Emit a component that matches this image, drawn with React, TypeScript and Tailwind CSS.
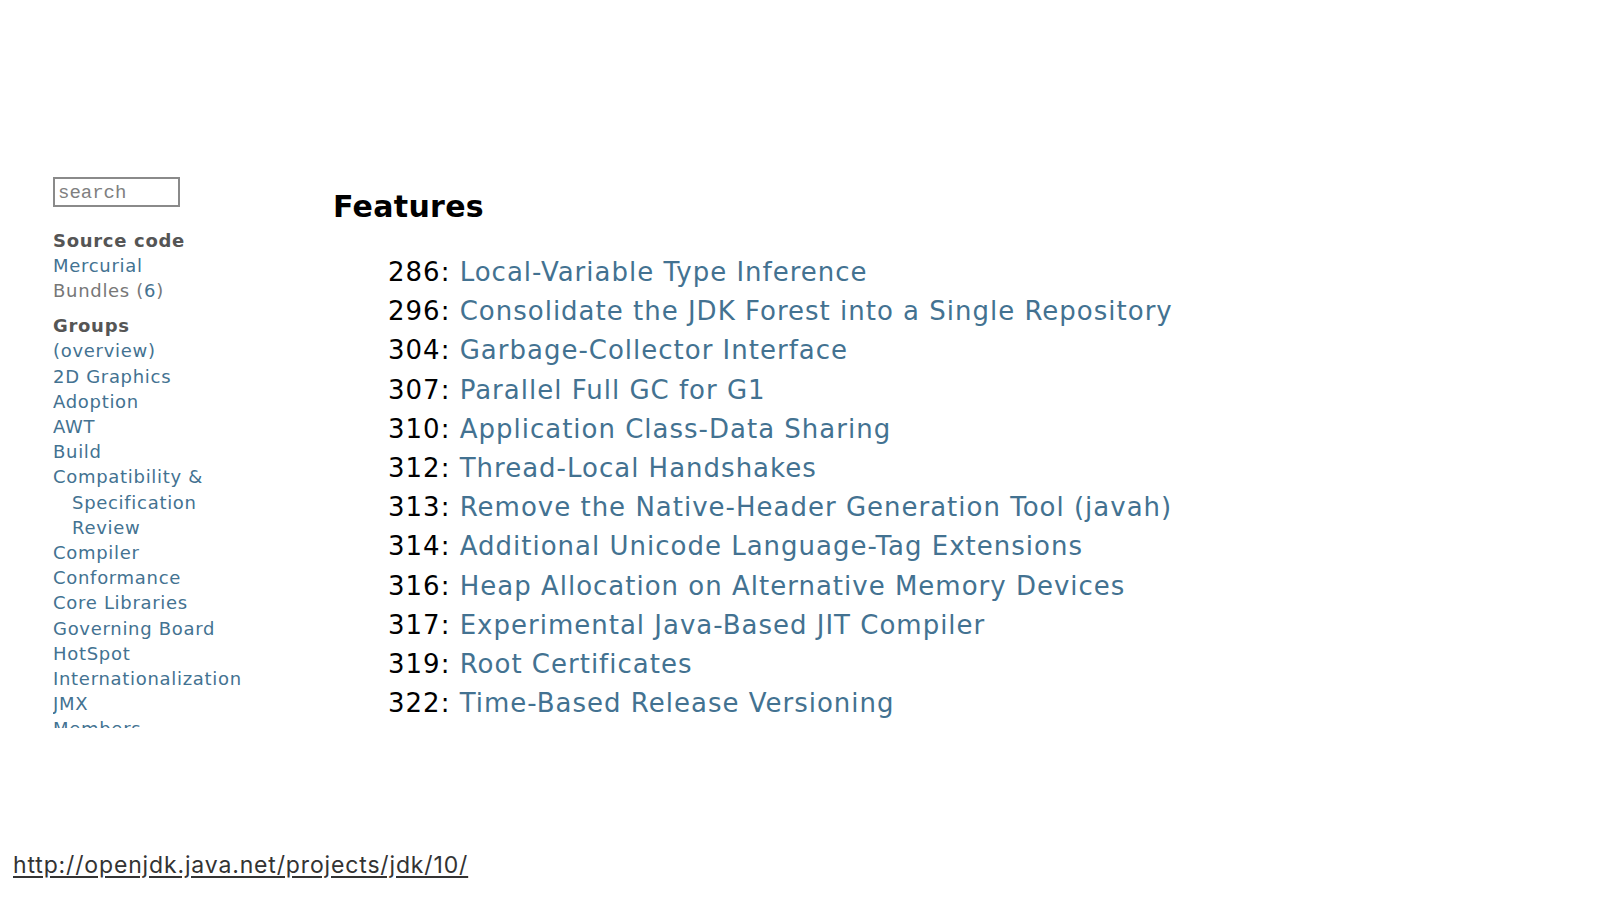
import React from 'react';

const features: [string, string][] = [
  ['286', 'Local-Variable Type Inference'],
  ['296', 'Consolidate the JDK Forest into a Single Repository'],
  ['304', 'Garbage-Collector Interface'],
  ['307', 'Parallel Full GC for G1'],
  ['310', 'Application Class-Data Sharing'],
  ['312', 'Thread-Local Handshakes'],
  ['313', 'Remove the Native-Header Generation Tool (javah)'],
  ['314', 'Additional Unicode Language-Tag Extensions'],
  ['316', 'Heap Allocation on Alternative Memory Devices'],
  ['317', 'Experimental Java-Based JIT Compiler'],
  ['319', 'Root Certificates'],
  ['322', 'Time-Based Release Versioning'],
];

const groups = [
  '(overview)',
  '2D Graphics',
  'Adoption',
  'AWT',
  'Build',
  'Compatibility & Specification Review',
  'Compiler',
  'Conformance',
  'Core Libraries',
  'Governing Board',
  'HotSpot',
  'Internationalization',
  'JMX',
  'Members',
];

function Sidebar() {
  return (
    <div className="w-[230px] shrink-0">
      <div className="w-[127px] h-[30px] border-2 border-[#8a8a8a] flex items-center px-[3px]">
        <span className="text-[19px] text-[#808080] font-['Liberation_Mono',monospace] pt-[2px]">search</span>
      </div>
      <div className="mt-[21px] h-[500px] overflow-hidden text-[18px] leading-[25.2px] tracking-[0.7px]">
        <div className="font-bold text-[#555555]">Source code</div>
        <div className="text-[#437291]">Mercurial</div>
        <div className="text-[#777777]">
          Bundles (<span className="text-[#437291]">6</span>)
        </div>
        <div className="mt-[9.5px] font-bold text-[#555555]">Groups</div>
        {groups.map((g) => (
          <div key={g} className="text-[#437291] pl-[19px] -indent-[19px] w-[210px]">
            {g}
          </div>
        ))}
      </div>
    </div>
  );
}

export default function App() {
  return (
    <div className="w-[1600px] h-[900px] bg-white flex flex-col font-['DejaVu_Sans',sans-serif]">
      <div className="flex pt-[177px] pl-[53px]">
        <Sidebar />
        <div className="ml-[50px] mt-[12px]">
          <h1 className="text-[30px] font-bold text-black leading-[36px] tracking-[0.3px]">Features</h1>
          <div className="mt-[28px] pl-[55px] text-[26px] leading-[39.2px] tracking-[1px]">
            {features.map(([n, t]) => (
              <div key={n}>
                <span className="text-black">{n}:</span>{' '}
                <span className="text-[#437291]">{t}</span>
              </div>
            ))}
          </div>
        </div>
      </div>
      <div className="mt-auto pb-[18px] pl-[13px]">
        <span className="text-[23px] text-[#333333] underline underline-offset-[3px] tracking-[0.85px] font-['Inter',sans-serif]">
          http://openjdk.java.net/projects/jdk/10/
        </span>
      </div>
    </div>
  );
}
